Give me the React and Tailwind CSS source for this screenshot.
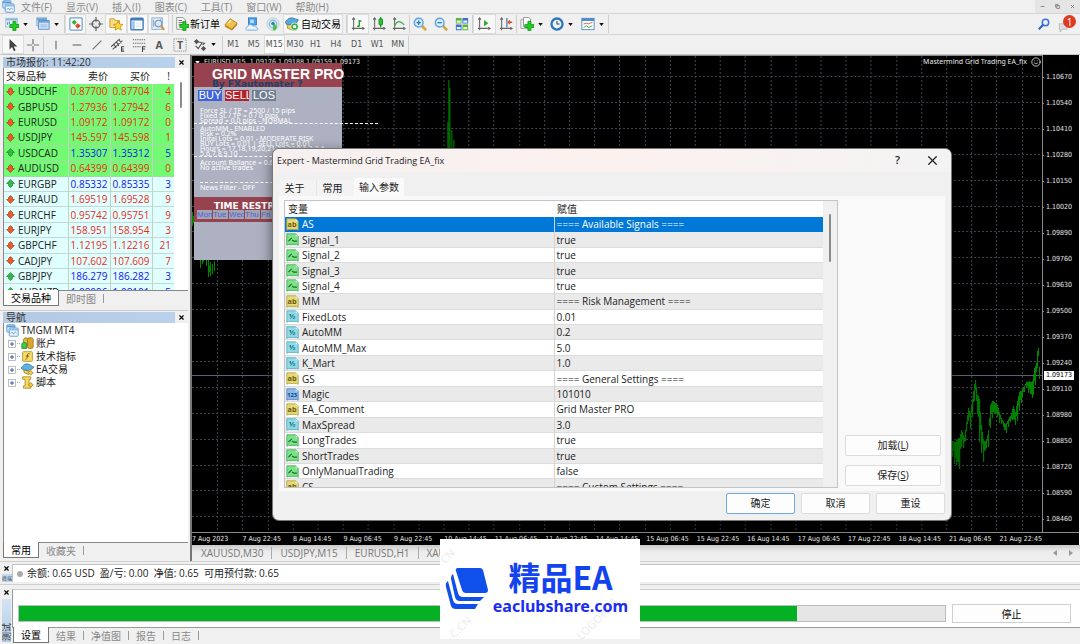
import { useState } from "react";
import { Minus, Copy, X, Smile } from "lucide-react";

const MENUS = ["文件(F)", "显示(V)", "插入(I)", "图表(C)", "工具(T)", "窗口(W)", "帮助(H)"];
const TIMEFRAMES = ["M1", "M5", "M15", "M30", "H1", "H4", "D1", "W1", "MN"];

const QUOTES = [
  ["USDCHF", "0.87700", "0.87704", 4, false],
  ["GBPUSD", "1.27936", "1.27942", 6, false],
  ["EURUSD", "1.09172", "1.09172", 0, false],
  ["USDJPY", "145.597", "145.598", 1, false],
  ["USDCAD", "1.35307", "1.35312", 5, true],
  ["AUDUSD", "0.64399", "0.64399", 0, false],
  ["EURGBP", "0.85332", "0.85335", 3, true],
  ["EURAUD", "1.69519", "1.69528", 9, false],
  ["EURCHF", "0.95742", "0.95751", 9, false],
  ["EURJPY", "158.951", "158.954", 3, false],
  ["GBPCHF", "1.12195", "1.12216", 21, false],
  ["CADJPY", "107.602", "107.609", 7, false],
  ["GBPJPY", "186.279", "186.282", 3, true],
  ["AUDNZD", "1.08096", "1.08101", 5, true],
];

const PARAMS = [
  ["str", "AS", "==== Available Signals ===="],
  ["bool", "Signal_1", "true"],
  ["bool", "Signal_2", "true"],
  ["bool", "Signal_3", "true"],
  ["bool", "Signal_4", "true"],
  ["str", "MM", "==== Risk Management ===="],
  ["dbl", "FixedLots", "0.01"],
  ["dbl", "AutoMM", "0.2"],
  ["dbl", "AutoMM_Max", "5.0"],
  ["dbl", "K_Mart", "1.0"],
  ["str", "GS", "==== General Settings ===="],
  ["int", "Magic", "101010"],
  ["str", "EA_Comment", "Grid Master PRO"],
  ["dbl", "MaxSpread", "3.0"],
  ["bool", "LongTrades", "true"],
  ["bool", "ShortTrades", "true"],
  ["bool", "OnlyManualTrading", "false"],
  ["str", "CS", "==== Custom Settings ===="],
];

const PRICES = [
  "1.10670", "1.10540", "1.10410", "1.10280", "1.10150", "1.10020",
  "1.09890", "1.09760", "1.09630", "1.09500", "1.09370", "1.09240",
  "1.09110", "1.08980", "1.08850", "1.08720", "1.08590", "1.08460",
];

const TIMES = [
  "7 Aug 2023", "7 Aug 22:45", "8 Aug 14:45", "9 Aug 06:45", "9 Aug 22:45", "10 Aug 14:45",
  "11 Aug 06:45", "11 Aug 22:45", "14 Aug 14:45", "15 Aug 06:45", "15 Aug 22:45", "16 Aug 14:45",
  "17 Aug 06:45", "17 Aug 22:45", "18 Aug 14:45", "21 Aug 06:45", "21 Aug 22:45",
];

// [x, high, low] in chart units, bars in between are interpolated
const BARS = [
  [761, 380, 395], [765, 388, 408], [769, 386, 411], [771, 374, 388], [774, 378, 390],
  [776, 358, 378], [778, 344, 364], [780, 354, 370], [782, 342, 358], [784, 330, 344],
  [785, 326, 336], [787, 342, 358], [789, 346, 380], [791, 366, 392], [793, 376, 403],
  [796, 378, 392], [798, 368, 388], [800, 346, 368], [802, 346, 360], [804, 348, 358],
  [807, 350, 360], [809, 356, 365], [812, 362, 368], [815, 362, 378], [817, 362, 372],
  [820, 360, 365], [823, 352, 364], [825, 358, 368], [827, 346, 362], [829, 333, 352],
  [831, 329, 347], [833, 327, 338], [836, 324, 331], [839, 325, 337], [841, 328, 339],
  [842, 328, 345], [844, 315, 330], [846, 308, 322], [847, 294, 309], [848, 290, 305],
  [849, 307, 322], [850, 318, 324],
];

const barPath = () => {
  let d = "";
  for (let i = 0; i < BARS.length - 1; i++) {
    const [x0, h0, l0] = BARS[i];
    const [x1, h1, l1] = BARS[i + 1];
    for (let x = x0; x < x1; x++) {
      const t = (x - x0) / (x1 - x0);
      const high = h0 + (h1 - h0) * t;
      const low = l0 + (l1 - l0) * t;
      const size = low - high;
      const a = Math.sin(x * 12.9) * 0.3 + 0.1;
      const b = Math.sin(x * 78.2) * 0.3 + 0.1;
      d += `M${x}.5 ${Math.round(high + size * a)}V${Math.round(low - size * b)}`;
    }
  }
  return d;
};

/* ---------- icons ---------- */

const Svg = ({ children, className = "size-[14px]" }) => (
  <svg viewBox="0 0 16 16" className={`${className} shrink-0`} fill="none" aria-hidden="true">
    {children}
  </svg>
);

const Caret = () => (
  <svg viewBox="0 0 6 4" className="h-[3px] w-[5px] shrink-0" aria-hidden="true">
    <path d="M0 0h6L3 4z" fill="#111" />
  </svg>
);

const Plus = () => (
  <path d="M9 5h3.500v3.500H16V12h-3.500v3.500H9V12H5.500V8.500H9z" fill="#1fd01f" stroke="#0b8a12" strokeWidth=".8" />
);

const NewChartIcon = () => (
  <Svg>
    <rect x="1" y="1.500" width="13" height="10" fill="#eaf4fd" stroke="#8fb6dc" />
    <path d="M1 3h13" stroke="#8fb6dc" strokeWidth="2" />
    <path d="M3 9V6M5 8V5" stroke="#3c78b8" />
    <Plus />
  </Svg>
);

const ProfilesIcon = () => (
  <Svg>
    <rect x="1" y="1" width="11" height="9" fill="#dcecfb" stroke="#6b9fd2" />
    <path d="M1 2.500h11" stroke="#6b9fd2" strokeWidth="2" />
    <rect x="3" y="4" width="12" height="10" fill="#cfe3f7" stroke="#4f8bc6" />
    <path d="M3 5.500h12" stroke="#6ea3d8" strokeWidth="2" />
    <path d="M5 11h8M5 9h8" stroke="#8fb8e2" />
  </Svg>
);

const MarketIcon = () => (
  <Svg>
    <rect x="1" y="1" width="14" height="14" rx="1" fill="#fff" stroke="#6c9fd2" strokeWidth="1.400" />
    <path d="M6 3l3 3-3 3-3-3z" fill="#2fb43c" />
    <path d="M10 7l3.500 3L10 13.500 7 10z" fill="#e2492c" />
  </Svg>
);

const TargetIcon = () => (
  <Svg>
    <circle cx="8" cy="8" r="4.500" stroke="#666" strokeWidth="1.500" />
    <path d="M8 0v6M8 10v6M0 8h6M10 8h6" stroke="#666" strokeWidth="1.400" />
  </Svg>
);

const NavigatorIcon = () => (
  <Svg>
    <path d="M1 2h5l1 2h5v8H1z" fill="#f6dc84" stroke="#c9992a" />
    <path d="M10.500 4.500l1.700 3.600 3.800.4-2.900 2.600.9 3.900-3.500-2-3.500 2 .9-3.900L5 8.500l3.800-.4z" fill="#ffd633" stroke="#b98a16" strokeWidth=".8" />
  </Svg>
);

const TerminalIcon = () => (
  <Svg>
    <rect x="1" y="1.500" width="14" height="13" rx="1" fill="#fff" stroke="#3f7cc0" strokeWidth="1.600" />
    <path d="M1 3h14" stroke="#3f7cc0" strokeWidth="2" />
    <path d="M4 5v9" stroke="#8fb8e2" strokeWidth="2.500" />
    <path d="M7 7h6M7 9h6M7 11h6" stroke="#d5e4f4" />
  </Svg>
);

const TesterIcon = () => (
  <Svg>
    <rect x="1" y="1" width="12" height="13" fill="#e9f2fb" stroke="#7ba6d2" />
    <path d="M3 3v8M5 5v4M11 2v3" stroke="#7593b5" />
    <circle cx="8.500" cy="7.500" r="3.800" fill="#d4e9fb" stroke="#7d93a8" strokeWidth="1.200" />
    <path d="M11.500 10.500l3.500 4" stroke="#cf9a3a" strokeWidth="2.400" />
  </Svg>
);

const OrderIcon = () => (
  <Svg>
    <path d="M2 .5h7l3 3V14H2z" fill="#fff" stroke="#888" />
    <path d="M4 4h4M4 6.500h6M4 9h4" stroke="#555" />
    <Plus />
  </Svg>
);

const EditorIcon = () => (
  <Svg>
    <path d="M1 9l6-7 8 5-6 7z" fill="#f0c24a" stroke="#b07f1c" />
    <path d="M1 9l8 5v1.500L1 11z" fill="#c78c20" />
    <path d="M9 14l6-7v2l-6 6.500z" fill="#a87014" />
    <path d="M5 7l3-3.500" stroke="#fdeebb" strokeWidth="1.500" />
  </Svg>
);

const VpsIcon = () => (
  <Svg>
    <rect x="4" y="1" width="9" height="8" fill="#4aa3ea" stroke="#2b7ac2" />
    <path d="M6 3h4v4H6z" fill="#bfe0fa" />
    <path d="M3 15c-3 0-2.500-4 0-4 .5-3 5-3 6-.5 3-1 4 .5 3.800 1.500 2.600 0 2.600 3 .2 3z" fill="#e7f2fc" stroke="#6fa5d8" />
  </Svg>
);

const SignalIcon = () => (
  <Svg>
    <circle cx="8" cy="8" r="7" fill="#dcebf3" stroke="#b9ccd8" />
    <circle cx="8" cy="8" r="4.300" stroke="#8fbfe0" strokeWidth="1.500" />
    <path d="M8 8c5 0 6 5 2 7.500L8 15z" fill="#4fbf4f" />
    <circle cx="8" cy="7.500" r="2" fill="#3a7fa8" />
  </Svg>
);

const AutoIcon = () => (
  <Svg>
    <path d="M2 7l1 6 6 2 4-2V6z" fill="#f1cf55" stroke="#b98c22" />
    <path d="M0 6c2-1 3-5 7-5s5 2 8 2c0 3-4 6-8 6S1 8 0 6z" fill="#58a8de" stroke="#2d76b0" />
    <circle cx="11" cy="11" r="4.300" fill="#2fae3a" stroke="#fff" strokeWidth=".8" />
    <path d="M9.300 9.300h3.400v3.400H9.300z" fill="#fff" />
  </Svg>
);

const Axes = ({ children }) => (
  <Svg>
    <path d="M3 1v14M1 13h14M1.500 3L3 1l1.500 2M13 11.500l2 1.500-2 1.500" stroke="#666" strokeWidth="1.200" />
    {children}
  </Svg>
);

const BarsIcon = () => (
  <Axes>
    <path d="M7 10.500h2M9.500 3.500v7.500M10 4.500h2" stroke="#1fa12b" strokeWidth="1.600" />
  </Axes>
);
const CandlesIcon = () => (
  <Axes>
    <path d="M10 0v12" stroke="#0c8a17" strokeWidth="1.300" />
    <rect x="8" y="2" width="4" height="7" rx="1" fill="#27c433" stroke="#0c8a17" />
  </Axes>
);
const LineIcon = () => (
  <Axes>
    <path d="M3 10c3-6 6-6 11-1" stroke="#3fae49" strokeWidth="1.400" />
  </Axes>
);
const ScrollIcon = () => (
  <Axes>
    <path d="M8 3.500l5 3.500-5 3.500z" fill="#22b32f" />
  </Axes>
);
const ShiftIcon = () => (
  <Axes>
    <path d="M9 1v11" stroke="#4c7fb3" strokeWidth="1.500" />
    <path d="M15 6h-4M12.500 4L10.500 6l2 2" stroke="#d9522e" strokeWidth="1.500" />
  </Axes>
);

const ZoomIcon = ({ plus }) => (
  <Svg>
    <path d="M10 10l5 5" stroke="#d6a43a" strokeWidth="3" />
    <circle cx="6.500" cy="6.500" r="5" fill="#d9eefc" stroke="#5aa2de" strokeWidth="1.600" />
    <path d={plus ? "M4 6.500h5M6.500 4v5" : "M4 6.500h5"} stroke="#2b75bb" strokeWidth="1.500" />
  </Svg>
);

const TileIcon = () => (
  <Svg>
    <path d="M1 1h6.500v6.500H1zM8.500 8.500H15V15H8.500z" fill="#5cb531" />
    <path d="M8.500 1H15v6.500H8.500zM1 8.500h6.500V15H1z" fill="#3c6fcf" />
    <path d="M2 4h4.500v2.500H2zM9.500 4H14v2.500H9.500zM2 11.500h4.500V14H2zM9.500 11.500H14V14H9.500z" fill="#e9f3ff" />
  </Svg>
);

const IndicatorsIcon = () => (
  <Svg>
    <path d="M1 3h6l2 2v8H1z" fill="#f4f4f4" stroke="#999" />
    <path d="M4 .5h6l2 2V11H4z" fill="#fff" stroke="#888" />
    <Plus />
  </Svg>
);

const ClockIcon = () => (
  <Svg>
    <circle cx="8" cy="8" r="6.300" fill="#eef6fd" stroke="#2d74bd" strokeWidth="2.600" />
    <path d="M8 4.500V8h3" stroke="#444" strokeWidth="1.200" />
  </Svg>
);

const TemplatesIcon = () => (
  <Svg>
    <rect x="1" y="1.500" width="14" height="13" fill="#fff" stroke="#4b88c6" />
    <path d="M1 3h14" stroke="#4b88c6" strokeWidth="3" />
    <path d="M3 8l3-1 3 1 4-2" stroke="#c05a3a" />
    <path d="M3 12l3-2 3 2 4-2" stroke="#3c9c4a" />
  </Svg>
);

const Line = ({ d, w = 1.4 }) => (
  <Svg>
    <path d={d} stroke="#777" strokeWidth={w} />
  </Svg>
);

const CursorIcon = () => (
  <Svg>
    <path d="M4 1v12l3-2.600 2 4.600 2-1-2-4.400h4z" fill="#444" />
  </Svg>
);

const ChannelIcon = () => (
  <Svg>
    <path d="M0 10L10 1M2 13L13 3M3 7l3 4M6 4l3 5M9 2l3 4" stroke="#555" strokeWidth="1.200" />
    <path d="M15 10h-3v5h3M12 12.500h2.500" stroke="#444" strokeWidth="1.200" />
  </Svg>
);

const FiboIcon = () => (
  <Svg>
    <path d="M1 2h14M1 6h14M1 10h9" stroke="#666" strokeWidth="1.300" strokeDasharray="1.500 1" />
    <path d="M15.500 10H12v6M12 12.500h3" stroke="#444" strokeWidth="1.200" />
  </Svg>
);

const TextIcon = ({ boxed }) => (
  <Svg>
    {boxed && <rect x="1" y="1" width="14" height="14" stroke="#888" strokeDasharray="1.500 1" />}
    <text x="8" y="12.500" textAnchor="middle" fontSize="12" fontWeight="700" fill="#555">
      {boxed ? "T" : "A"}
    </text>
  </Svg>
);

const ArrowsIcon = () => (
  <Svg>
    <path d="M1 4l3-3 3 3-3 3zM9 12l3-3 3 3-3 3z" fill="#555" />
    <path d="M3 9l3 3 4-6M4 4l9 2-2 2" stroke="#555" strokeWidth="1.300" />
  </Svg>
);

const SearchIcon = () => (
  <Svg className="size-3">
    <circle cx="10" cy="6" r="4.300" stroke="#3f74d8" strokeWidth="2" fill="#eaf1ff" />
    <path d="M7 9l-6 6" stroke="#2d5fc4" strokeWidth="2.800" />
  </Svg>
);

const AppIcon = () => (
  <Svg className="size-[13px]">
    <rect x="1" y="1" width="10" height="9" rx="1" fill="#d9ebfb" stroke="#5d9bd5" strokeWidth="1.200" />
    <path d="M1 3h10" stroke="#5d9bd5" strokeWidth="2" />
    <rect x="4" y="5" width="11" height="10" rx="1" fill="#f4faff" stroke="#5d9bd5" strokeWidth="1.200" />
    <path d="M4 7h11" stroke="#8dbbe6" strokeWidth="2" />
    <path d="M6 12l1.500-2 2 2.500 2-3 1.500 2" stroke="#5d9bd5" />
  </Svg>
);

const Tick = ({ up }) => (
  <Svg className="size-[9px]">
    <path
      d={up ? "M8 1l7 7h-3.500v4L8 15l-3.500-3V8H1z" : "M8 15l7-7h-3.500V4L8 1 4.500 4v4H1z"}
      fill={up ? "#35b948" : "#ef5a2c"}
      stroke={up ? "#1b7f30" : "#a33a18"}
      strokeWidth="1.200"
    />
  </Svg>
);

const PARAM_STYLE = {
  str: ["#e6d877", "#b3a13a", "#6b5c10", "ab"],
  bool: ["#7fe08a", "#3fae55", "#14722a", ""],
  dbl: ["#8fdbe6", "#4fa9bb", "#17697d", "½"],
  int: ["#8cb9ea", "#4d83bf", "#123f7a", "123"],
};

const ParamIcon = ({ type }) => {
  const [fill, stroke, ink, label] = PARAM_STYLE[type];
  return (
    <Svg className="size-[13px]">
      <path d="M1 1h11l3 3v11l-2-1H3l-2 1z" fill={fill} stroke={stroke} />
      <path d="M12 1v3h3z" fill="#ffffff" opacity=".6" />
      {type === "bool" ? (
        <path d="M3 10l4-4M7.500 8.500l2 1.500h4" stroke={ink} strokeWidth="1.500" />
      ) : (
        <text x="7.500" y="11" textAnchor="middle" fontSize={type === "int" ? 7 : 9} fontWeight="700" fill={ink}>
          {label}
        </text>
      )}
    </Svg>
  );
};

const AccountsIcon = () => (
  <Svg className="size-[13px]">
    <rect x="3" y="1" width="6" height="9" rx="3" fill="#e4b93b" stroke="#9c7617" />
    <rect x="8" y="1" width="7" height="13" rx="2" fill="#d9a72b" stroke="#9c7617" />
    <path d="M1 9c0-3 6-3 6 0v5H1z" fill="#3fc84a" stroke="#1d8a2b" />
  </Svg>
);
const FunctionIcon = () => (
  <Svg className="size-[13px]">
    <rect x="2" y="2" width="12" height="12" rx="1" fill="#f5dc6d" stroke="#b58d20" />
    <path d="M10.500 4.500c-2-1-2.500 1-2.700 3S7 12 5.500 11.500M6 7.500h4" stroke="#7c5c0c" strokeWidth="1.200" />
  </Svg>
);
const ExpertIcon = () => (
  <Svg className="size-[13px]">
    <path d="M3 8l1 4 5 2 4-3z" fill="#ecc84e" stroke="#a8801c" />
    <path d="M0 6c2-1 3-5 7-5s5 3 9 4c-2 3-5 4-8 4S1 8 0 6z" fill="#5fb3dc" stroke="#2d7ca8" />
    <path d="M12 9l3 3-3 3-3-3z" fill="#f3cf45" stroke="#a8801c" />
  </Svg>
);
const ScriptIcon = () => (
  <Svg className="size-[13px]">
    <path d="M2 1h10v3h-2v8h2v3H3v-3h2V4H2z" fill="#f3d96c" stroke="#ab8420" />
    <path d="M12 8l3 3-3 3-3-3z" fill="#f0c433" stroke="#a8801c" />
  </Svg>
);

/* ---------- toolbar ---------- */

const Tool = ({ label, pressed, children }) => (
  <button
    type="button"
    aria-label={label}
    className={
      pressed
        ? "flex h-full flex-1 items-center justify-center border border-[#dcdcdc] bg-[#f8f8f8]"
        : "flex h-full flex-1 items-center justify-center"
    }
  >
    {children}
  </button>
);

const DropTool = ({ label, children }) => (
  <button type="button" aria-label={label} className="flex h-full flex-1 items-center gap-[4px] pl-[3px]">
    {children}
    <Caret />
  </button>
);

const Sep = () => <span className="h-[18px] w-px shrink-0 bg-[#cfcfcf]" />;

const Toolbars = () => (
  <>
    <div className="flex h-[21px] items-center border-b border-[#d4d4d4] pl-[2px]">
      <div className="flex h-full w-[62px]">
        <DropTool label="New chart"><NewChartIcon /></DropTool>
        <DropTool label="Profiles"><ProfilesIcon /></DropTool>
      </div>
      <Sep />
      <div className="flex h-full w-[104px]">
        <Tool label="Market watch" pressed><MarketIcon /></Tool>
        <Tool label="Data window"><TargetIcon /></Tool>
        <Tool label="Navigator" pressed><NavigatorIcon /></Tool>
        <Tool label="Terminal" pressed><TerminalIcon /></Tool>
        <Tool label="Strategy tester" pressed><TesterIcon /></Tool>
      </div>
      <div className="w-[3px]" />
      <Sep />
      <button type="button" className="flex w-[48px] shrink-0 items-center gap-px whitespace-nowrap pl-[2px] text-[10px]">
        <OrderIcon />
        新订单
      </button>
      <div className="flex h-full w-[62px]">
        <Tool label="Editor"><EditorIcon /></Tool>
        <Tool label="VPS"><VpsIcon /></Tool>
        <Tool label="Signals"><SignalIcon /></Tool>
      </div>
      <button type="button" className="flex h-full w-[60px] shrink-0 items-center gap-[2px] whitespace-nowrap border border-[#dcdcdc] bg-[#f8f8f8] pl-px text-[10px]">
        <AutoIcon />
        自动交易
      </button>
      <div className="w-[3px]" />
      <Sep />
      <div className="flex h-full w-[62px]">
        <Tool label="Bar chart" pressed><BarsIcon /></Tool>
        <Tool label="Candlesticks"><CandlesIcon /></Tool>
        <Tool label="Line chart"><LineIcon /></Tool>
      </div>
      <Sep />
      <div className="flex h-full w-[62px]">
        <Tool label="Zoom in"><ZoomIcon plus /></Tool>
        <Tool label="Zoom out"><ZoomIcon /></Tool>
        <Tool label="Tile windows"><TileIcon /></Tool>
      </div>
      <Sep />
      <div className="flex h-full w-[43px]">
        <Tool label="Auto scroll" pressed><ScrollIcon /></Tool>
        <Tool label="Chart shift"><ShiftIcon /></Tool>
      </div>
      <Sep />
      <div className="flex h-full w-[91px]">
        <DropTool label="Indicators"><IndicatorsIcon /></DropTool>
        <DropTool label="Periods"><ClockIcon /></DropTool>
        <DropTool label="Templates"><TemplatesIcon /></DropTool>
      </div>
      <Sep />
      <div className="ml-auto flex items-center gap-2 pr-1">
        <button type="button" aria-label="Search"><SearchIcon /></button>
        <button type="button" aria-label="Notifications" className="relative flex h-4 w-[18px] items-end">
          <Svg className="size-[11px]">
            <path d="M2 4h11v8H7l-4 4v-4H2z" fill="#ddd" stroke="#aaa" />
          </Svg>
          <span className="absolute -top-px right-0 flex size-[13px] items-center justify-center rounded-full bg-[#dd3a22] text-[10px] leading-none text-white">
            1
          </span>
        </button>
      </div>
    </div>

    <div className="flex h-5 items-center border-b border-[#c4c4c4] pl-[2px] text-[8px] text-[#555]">
      <div className="flex h-full w-[41px]">
        <Tool label="Cursor" pressed><CursorIcon /></Tool>
        <Tool label="Crosshair"><Line d="M8 1v6M8 9v6M1 8h6M9 8h6" /></Tool>
      </div>
      <Sep />
      <div className="ml-[2px] flex h-full w-[144px]">
        <Tool label="Vertical line"><Line d="M8 3v10" /></Tool>
        <Tool label="Horizontal line"><Line d="M3 8h10" /></Tool>
        <Tool label="Trendline"><Line d="M3 13L13 3" /></Tool>
        <Tool label="Channel"><ChannelIcon /></Tool>
        <Tool label="Fibonacci"><FiboIcon /></Tool>
        <Tool label="Text"><TextIcon /></Tool>
        <Tool label="Text label"><TextIcon boxed /></Tool>
      </div>
      <div className="flex h-full w-[32px]">
        <DropTool label="Arrows"><ArrowsIcon /></DropTool>
      </div>
      <Sep />
      <div className="grid h-full w-[185px] grid-cols-9">
        {TIMEFRAMES.map((tf) => (
          <button
            key={tf}
            type="button"
            className={tf === "M15" ? "border border-[#dcdcdc] bg-[#fafafa]" : "border border-transparent"}
          >
            <span className="flex justify-center pt-px font-['DejaVu_Sans',sans-serif]">{tf}</span>
          </button>
        ))}
      </div>
      <Sep />
    </div>
  </>
);

/* ---------- left side ---------- */

const PanelTitle = ({ children }) => (
  <div className="flex h-3 items-center pl-[3px]">
    <div className="flex h-[11px] flex-1 items-center bg-linear-to-r from-[#b4c9e2] to-[#b9d1ec] pl-[3px] text-[10px] leading-none text-[#333]">
      {children}
    </div>
    <button type="button" aria-label="Close" className="flex w-[13px] justify-center">
      <X className="size-[7px] text-black" strokeWidth={4} />
    </button>
  </div>
);

const Tabs = ({ items, active, onSelect }) => (
  <div className="flex h-[15px] items-stretch text-[10px] leading-none">
    {items.map((name) => (
      <button
        key={name}
        type="button"
        onClick={() => onSelect(name)}
        className={
          name === active
            ? "-mt-px border-r border-b border-l border-[#777] bg-white px-[7px] text-black"
            : "my-[3px] border-r border-[#999] px-[7px] text-[#888]"
        }
      >
        {name}
      </button>
    ))}
  </div>
);

const MarketWatch = () => {
  const [tab, setTab] = useState("交易品种");
  return (
    <section className="flex flex-col">
      <PanelTitle>市场报价: 11:42:20</PanelTitle>
      <div className="ml-[3px] flex h-[223px] overflow-hidden border-b border-l border-[#888] bg-white">
        <table className="h-[232px] w-[170px] table-fixed text-right text-[10px] leading-[14px]">
          <thead>
            <tr className="h-4 text-[#222]">
              <th className="w-[64px] p-0 pl-[2px] text-left font-normal">交易品种</th>
              <th className="w-[42px] p-0 pr-[2px] font-normal">卖价</th>
              <th className="w-[42px] p-0 pr-[2px] font-normal">买价</th>
              <th className="p-0 pr-[4px] font-normal">!</th>
            </tr>
          </thead>
          <tbody>
            {QUOTES.map(([name, bid, ask, spread, up], i) => (
              <tr
                key={name}
                className={`border-b ${i < 6 ? "border-[#a5d8a0] bg-[#72fb72]" : "border-[#c8d6d8] bg-[#e0ffff]"} ${
                  up ? "text-[#1414f0]" : "text-[#ee2a1c]"
                }`}
              >
                <td className="border-r border-[#c0d4c4] p-0 text-left text-[#222]">
                  <span className="flex items-center gap-[3px] pl-[2px]">
                    <Tick up={up} />
                    {name}
                  </span>
                </td>
                <td className="border-r border-[#c0d4c4] p-0 pr-[2px]">{bid}</td>
                <td className="border-r border-[#c0d4c4] p-0 pr-[2px]">{ask}</td>
                <td className="p-0 pr-[3px]">{spread}</td>
              </tr>
            ))}
          </tbody>
        </table>
        <div className="ml-[6px] mt-[14px] h-[26px] w-[2px] rounded bg-[#8a8a8a]" />
      </div>
      <div className="pl-[3px]">
        <Tabs items={["交易品种", "即时图"]} active={tab} onSelect={setTab} />
      </div>
    </section>
  );
};

const Navigator = () => {
  const [tab, setTab] = useState("常用");
  const nodes = [
    ["账户", <AccountsIcon />],
    ["技术指标", <FunctionIcon />],
    ["EA交易", <ExpertIcon />],
    ["脚本", <ScriptIcon />],
  ];
  return (
    <section className="mt-1 flex flex-1 flex-col border-t border-[#ccc]">
      <PanelTitle>导航</PanelTitle>
      <div className="ml-[3px] flex-1 border-b border-l border-[#888] bg-white text-[10px] leading-[13px] text-[#222]">
        <div className="flex h-[14px] items-center gap-[2px] pl-[2px]">
          <AppIcon />
          TMGM MT4
        </div>
        <ul>
          {nodes.map(([name, icon]) => (
            <li key={name} className="flex h-[13px] items-center gap-px pl-[4px]">
              <Svg className="size-[8px]">
                <rect x="1" y="1" width="14" height="14" fill="#fff" stroke="#aaa" strokeWidth="1.500" />
                <path d="M4 8h8M8 4v8" stroke="#3b5da8" strokeWidth="2" />
              </Svg>
              <span className="w-[3px] border-t border-dotted border-[#aaa]" />
              {icon}
              <span className="pl-px">{name}</span>
            </li>
          ))}
        </ul>
      </div>
      <div className="mb-[3px] pl-[3px]">
        <Tabs items={["常用", "收藏夹"]} active={tab} onSelect={setTab} />
      </div>
    </section>
  );
};

/* ---------- chart ---------- */

const Dashes = () => <div className="w-[184px] border-t border-dashed border-white" />;

const EaPanel = () => (
  <div className="absolute left-[2px] top-[7px] h-[197px] w-[148px] bg-[#adb1c1] text-[8px] text-white">
    <div className="h-6 bg-[#96434f] pl-[18px] pt-[3px] font-['Liberation_Sans',sans-serif] text-[14px] font-bold leading-[16px] whitespace-nowrap">
      GRID MASTER PRO
    </div>
    <div className="-mt-2 pl-[18px] font-['DejaVu_Sans',sans-serif] text-[9px] font-bold leading-[10px] whitespace-nowrap text-[#1e4167]">
      By FXautomater ?
    </div>
    <div className="mt-[1px] flex gap-[3px] pl-1 font-['Liberation_Sans',sans-serif] text-[11px] leading-[11px]">
      <button type="button" className="w-6 overflow-hidden bg-[#3f63dc]">BUY</button>
      <button type="button" className="w-6 overflow-hidden bg-[#b3222a]">SELL</button>
      <button type="button" className="w-6 overflow-hidden bg-[#708090]">LOS</button>
    </div>
    <div className="whitespace-nowrap pt-[7px] font-['Noto_Sans',sans-serif] text-[7px] leading-[5px] *:pl-[6px]">
      <p>Force SL / TP = 2500 / 15 pips</p>
      <p>Fixed SL / TP = 0 / 0 pips</p>
      <p>Spread = 0.0 pips - NORMAL</p>
      <Dashes />
      <p className="mt-[2px]">AutoMM - ENABLED</p>
      <p>Risk = 0.2%</p>
      <p>Inital Lots = 0.01 - MODERATE RISK</p>
      <p>BUY Lots = 0.01 | SELL Lots = 0.01</p>
      <p>Hours = 17,18,19,20,21,22,23,0,1,2,3,4,</p>
      <p>5,6,7,8,9,10</p>
      <Dashes />
      <p className="mt-[3px]">Account Ballance = 0.65</p>
      <p>No active trades</p>
      <div className="mt-3">
        <Dashes />
      </div>
      <p className="mt-[2px]">News Filter - OFF</p>
    </div>
    <div className="mt-[7px] h-[25px] bg-[#96434f] pt-[5px] font-['DejaVu_Sans',sans-serif]">
      <p className="whitespace-nowrap pl-5 text-[9px] font-bold leading-[8px]">TIME RESTRICTION</p>
      <div className="flex gap-px pl-[3px] font-['Liberation_Sans',sans-serif] leading-[9px] text-[#4a62dc]">
        {["Mon", "Tue", "Wed", "Thu", "Fri"].map((day) => (
          <span key={day} className="w-[15px] overflow-hidden bg-[#a3a5b3]">{day}</span>
        ))}
      </div>
    </div>
  </div>
);

const Chart = () => (
  <div className="flex flex-1 flex-col border-r border-white bg-black font-['DejaVu_Sans_Condensed','Noto_Sans',sans-serif] text-[7px] text-[#e6e6e6]">
    <div className="flex flex-1">
      <div className="relative flex-1 border-r border-t border-[#8a8a8a]">
        <svg viewBox="0 0 852 476" preserveAspectRatio="none" className="absolute inset-0 h-full w-full" fill="none">
          {Array.from({ length: 33 }, (_, i) => (
            <path key={i} d={`M${Math.round(25.2 * (i + 1))}.5 0V476`} stroke="#3d4650" strokeDasharray="2 2" />
          ))}
          {PRICES.map((p, i) => (
            <path key={p} d={`M0 ${Math.round(20 + 25.900 * i)}.5H852`} stroke="#3d4650" strokeDasharray="2 2" />
          ))}
          <path d="M0 319.500H852" stroke="#59626e" />
          <path d={barPath()} stroke="#008a00" />
          <path
            d="M.5 156V170M1.500 160V167M8.500 200V212M10.500 198V208M11.500 203V206M14.500 202V210M16.500 204V221M18.500 206V220M17.500 210V216M20.500 208V218M22.500 205V215M257.500 24V96M258.500 32V96M256.500 66V96M260.500 74V96M262.500 84V96"
            stroke="#008a00"
          />
        </svg>
        <div className="relative flex items-center justify-between pl-[3px] pr-px pt-[1px]">
          <span className="flex items-center gap-[4px] whitespace-nowrap">
            <svg viewBox="0 0 6 4" className="h-[3px] w-[5px]"><path d="M0 0h6L3 4z" fill="#fff" /></svg>
            EURUSD,M15&nbsp; 1.09176 1.09188 1.09159 1.09173
          </span>
          <span className="flex items-center gap-[4px] font-['Noto_Sans',sans-serif]">
            Mastermind Grid Trading EA_fix
            <Smile className="size-[10px]" />
          </span>
        </div>
        <EaPanel />
      </div>
      <div className="relative flex w-9 flex-col pt-[9px]">
        {PRICES.map((p) => (
          <span key={p} className="flex flex-1 items-center gap-[2px]">
            <span className="w-px border-t border-[#8a8a8a]" />
            {p}
          </span>
        ))}
        <span className="absolute left-px top-[316px] bg-white px-[2px] leading-[9px] text-black">1.09173</span>
      </div>
    </div>
    <div className="h-[13px] overflow-hidden border-t border-[#8a8a8a]">
      <div className="-mr-9 grid w-[858px] grid-cols-17 leading-[12px]">
        {TIMES.map((t) => (
          <span key={t} className="whitespace-nowrap">{t}</span>
        ))}
      </div>
    </div>
  </div>
);

const ChartTabs = () => (
  <div className="flex h-4 items-center bg-linear-to-b from-[#c9c9c9] via-[#ececec] via-40% to-[#f0f0f0] pl-px text-[10px] leading-[12px] text-[#777]">
    {["XAUUSD,M30", "USDJPY,M15", "EURUSD,H1", "XAUUSD,H1"].map((t) => (
      <button key={t} type="button" className="border-r border-[#aaa] px-2">{t}</button>
    ))}
    <span className="ml-auto flex gap-[12px] pr-[7px]">
      <svg viewBox="0 0 4 6" className="h-[6px] w-1"><path d="M4 0v6L0 3z" fill="#999" /></svg>
      <svg viewBox="0 0 4 6" className="h-[6px] w-1"><path d="M0 0v6l4-3z" fill="#999" /></svg>
    </span>
  </div>
);

/* ---------- bottom ---------- */

const CloseCross = () => (
  <button type="button" aria-label="Close" className="flex justify-center">
    <X className="size-[7px] text-black" strokeWidth={4} />
  </button>
);

const StatusBar = () => (
  <div className="flex h-6 border-t border-b border-[#d0d0d0] pt-[2px] pb-[2px]">
    <div className="flex w-3 flex-col justify-between pl-px pt-px">
      <CloseCross />
      <span className="ml-px flex h-[8px] w-[10px] items-center overflow-hidden bg-[#c3d7ec] text-[5px] leading-[6px] text-[#345]">终端</span>
    </div>
    <div className="flex flex-1 items-center gap-1 border-t border-l border-[#c4c4c4] bg-white pl-1 text-[10px] whitespace-pre text-[#222]">
      <span className="size-[6px] rounded-full bg-[#aaa]" />
      余额: 0.65 USD  盈/亏: 0.00  净值: 0.65  可用预付款: 0.65
    </div>
  </div>
);

const Tester = () => {
  const [tab, setTab] = useState("设置");
  const progress = 84;
  return (
    <div className="flex h-[59px] pt-[4px]">
      <div className="flex w-3 flex-col gap-[3px] pl-px">
        <CloseCross />
        <span className="mb-[2px] ml-px flex w-[9px] flex-1 items-center bg-linear-to-b from-[#d5e4f3] to-[#b0cae6] pb-px text-[9px] leading-[9px] text-[#333] [writing-mode:sideways-lr]">
          测试
        </span>
      </div>
      <div className="flex flex-1 flex-col">
        <div className="flex flex-1 items-center gap-[6px] border-t border-b border-l border-[#999] border-t-[#ccc] bg-white pl-[5px] pr-[9px] pt-[10px]">
          <div role="progressbar" aria-valuenow={progress} className="h-[17px] flex-1 border border-[#bcbcbc] bg-[#e6e6e6]">
            <div className="h-full bg-[#06b025]" style={{ width: `${progress}%` }} />
          </div>
          <button type="button" className="h-[19px] w-[119px] border border-[#d0d0d0] bg-[#fdfdfd] text-[10px] leading-none">停止</button>
        </div>
        <div className="mb-px pl-px">
          <Tabs items={["设置", "结果", "净值图", "报告", "日志"]} active={tab} onSelect={setTab} />
        </div>
      </div>
    </div>
  );
};

/* ---------- EA dialog ---------- */

const DialogButton = ({ children, primary }) => (
  <button
    type="button"
    className={
      primary
        ? "h-[21px] w-[69px] rounded-xs border border-[#6fa8dc] bg-[#fdfdfd]"
        : "h-[21px] w-[69px] rounded-xs border border-[#dcdcdc] bg-[#fdfdfd]"
    }
  >
    {children}
  </button>
);

const ExpertDialog = () => {
  const [selected, setSelected] = useState("AS");
  return (
    <div
      role="dialog"
      aria-label="Expert - Mastermind Grid Trading EA_fix"
      className="absolute left-[273px] top-[149px] flex w-[678px] flex-col overflow-hidden rounded-md bg-[#f0f0f0] text-[10px] text-[#222] shadow-[0_0_0_1px_#777,0_4px_14px_rgba(0,0,0,0.6)]"
    >
      <header className="flex h-[23px] items-center bg-linear-to-r from-[#f6f0f0] via-[#fbf1ef] to-[#f3f3f3] pl-1 pr-[11px] text-[9px]">
        <h1>Expert - Mastermind Grid Trading EA_fix</h1>
        <button type="button" aria-label="Help" className="ml-auto mr-[25px] text-[11px] font-semibold">?</button>
        <button type="button" aria-label="Close"><X className="size-[15px]" strokeWidth={2} /></button>
      </header>

      <nav className="mt-[6px] flex h-[18px] items-end pl-[6px]">
        <button type="button" className="h-4 w-[38px] border-r border-[#e6e6e6] bg-[#f3f3f3] pr-[6px] leading-none">关于</button>
        <button type="button" className="h-4 w-[37px] bg-[#f3f3f3] pr-[6px] leading-none">常用</button>
        <button type="button" className="h-full w-[50px] bg-[#fafafa] leading-none">输入参数</button>
      </nav>

      <div className="mx-[6px] flex h-[295px] gap-[7px] bg-[#f9f9f9] pb-[3px] pl-[5px] pr-[4px] pt-1">
        <div className="flex flex-1 overflow-hidden border border-[#c4c4c8] bg-[#f0f0f0]">
          <table className="h-[294px] flex-1 table-fixed bg-white text-left leading-[14px]">
            <thead>
              <tr className="h-4">
                <th className="w-1/2 p-0 pl-[3px] font-normal">变量</th>
                <th className="w-1/2 p-0 pl-[3px] font-normal">赋值</th>
              </tr>
            </thead>
            <tbody>
              {PARAMS.map(([type, name, value], i) => (
                <tr
                  key={name}
                  onClick={() => setSelected(name)}
                  className={
                    name === selected
                      ? "border-b border-[#0078d7] bg-[#0078d7] text-white"
                      : i % 2
                        ? "border-b border-[#dcdcdc] bg-[#eaeaea]"
                        : "border-b border-[#dcdcdc]"
                  }
                >
                  <td className="border-r border-[#d4d4d4] p-0">
                    <span className="flex items-center gap-[3px] pl-px">
                      <ParamIcon type={type} />
                      {name}
                    </span>
                  </td>
                  <td className="p-0 pl-[2px] whitespace-pre">{value}</td>
                </tr>
              ))}
            </tbody>
          </table>
          <div className="flex w-[14px] justify-center pt-[13px]">
            <div className="h-12 w-[2px] rounded bg-[#8a8a8a]" />
          </div>
        </div>
        <div className="flex w-24 flex-col justify-end gap-[9px] pb-[2px]">
          <button type="button" className="h-[21px] rounded-xs border border-[#dcdcdc] bg-[#fdfdfd]">加载(<u>L</u>)</button>
          <button type="button" className="h-[21px] rounded-xs border border-[#dcdcdc] bg-[#fdfdfd]">保存(<u>S</u>)</button>
        </div>
      </div>

      <footer className="flex justify-end gap-[6px] pb-[6px] pr-[6px] pt-[2px]">
        <DialogButton primary>确定</DialogButton>
        <DialogButton>取消</DialogButton>
        <DialogButton>重设</DialogButton>
      </footer>
    </div>
  );
};

const LogoBadge = () => (
  <div className="absolute bottom-[5px] left-1/2 flex h-[100px] w-[200px] -translate-x-1/2 items-center overflow-hidden bg-white">
    <span className="absolute left-0 top-[9px] -rotate-45 text-[11px] text-[#ebebeb]">CN</span>
    <span className="absolute bottom-1 left-2 -rotate-45 text-[11px] text-[#ebebeb]">C.CN</span>
    <span className="absolute bottom-[12px] right-[16px] -rotate-45 text-[11px] whitespace-nowrap text-[#ebebeb]">LOGO神器</span>
    <svg viewBox="0 0 44 44" className="relative ml-[5px] h-11 w-11 shrink-0" aria-hidden="true">
      <g fill="#0f50ea">
        <path d="M13 1h22q2 0 3 2l5 20q0 3-3 3H21q-3 0-4-3L11 4q-1-3 2-3z" />
        <path d="M8 7l5 19q1 4 5 4h21l-4 4H15q-4 0-5-4L6 12q0-4 2-5z" />
        <path d="M3 14l5 19q1 4 5 4h20l-3 5H11q-4 0-5-3L1 20q-1-4 2-6z" />
      </g>
    </svg>
    <div className="relative flex flex-1 flex-col items-center pb-[2px] pr-2 font-bold">
      <span className="font-['Noto_Sans_CJK_SC',sans-serif] text-[32px] leading-[35px] text-[#1243ee]">精品EA</span>
      <span className="font-['Noto_Sans',sans-serif] text-[16px] leading-[24px] text-[#1a2cf0]">eaclubshare.com</span>
    </div>
  </div>
);

const App = () => (
  <div className="relative flex min-h-screen flex-col overflow-hidden bg-[#f0f0f0] font-['Open_Sans','Noto_Sans_CJK_SC',sans-serif] text-black">
    <div className="flex h-[14px] items-center border-b border-[#d4d4d4] pl-[2px] text-[10px] leading-none text-[#888]">
      <AppIcon />
      <nav className="ml-[6px] flex gap-[14px]">
        {MENUS.map((m) => (
          <button key={m} type="button">{m}</button>
        ))}
      </nav>
      <div className="ml-auto flex h-full bg-[#e5e5e5]">
        {[Minus, Copy, X].map((Icon, i) => (
          <button key={i} type="button" aria-label={["Minimize", "Restore", "Close"][i]} className="flex w-[15px] items-center justify-center">
            <Icon className="size-[5px] text-[#777]" strokeWidth={4} />
          </button>
        ))}
      </div>
    </div>
    <Toolbars />

    <main className="flex flex-1">
      <aside className="flex w-[188px] shrink-0 flex-col pt-px">
        <MarketWatch />
        <Navigator />
      </aside>
      <div className="ml-[2px] flex flex-1 flex-col border-l-2 border-[#777]">
        <Chart />
        <ChartTabs />
      </div>
    </main>

    <StatusBar />
    <Tester />

    <ExpertDialog />
    <LogoBadge />
  </div>
);

export default App;
